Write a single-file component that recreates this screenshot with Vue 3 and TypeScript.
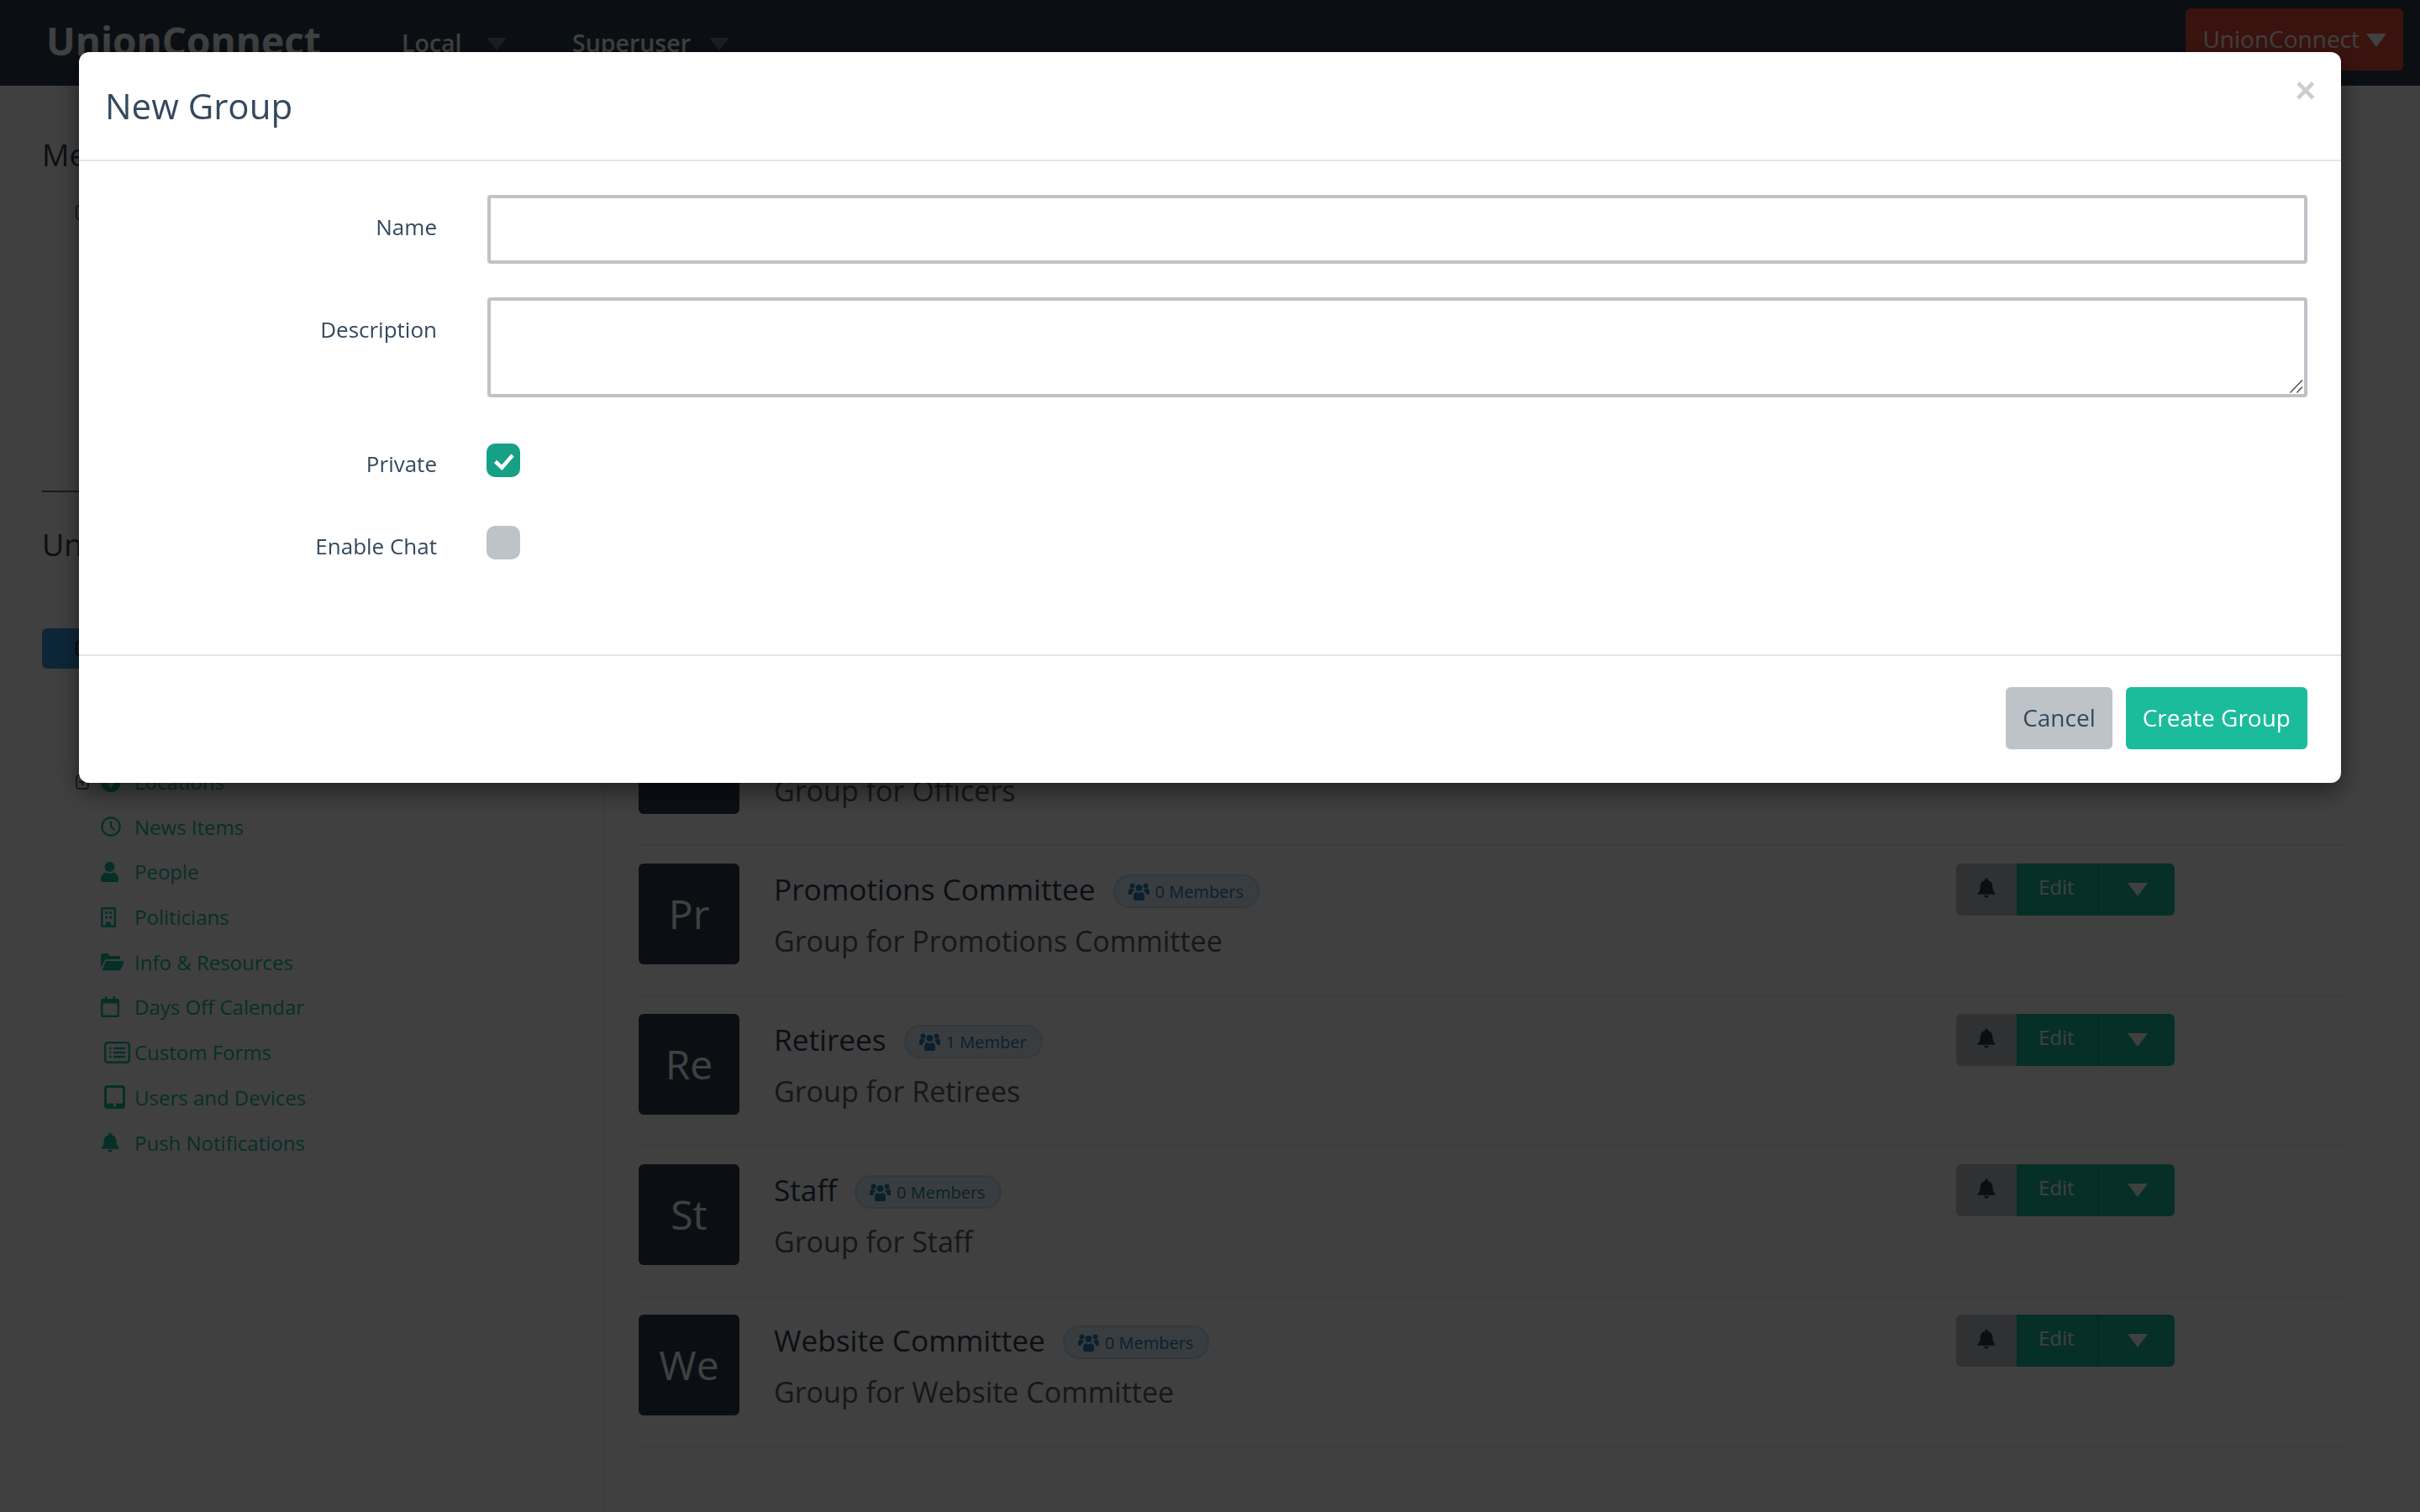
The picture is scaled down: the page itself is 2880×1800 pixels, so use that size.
<script setup lang="ts">
const navLinks = ['Local', 'Superuser']

const sideItems = [
  { label: 'Locations', icon: 'marker', toggle: true },
  { label: 'News Items', icon: 'clock' },
  { label: 'People', icon: 'user' },
  { label: 'Politicians', icon: 'building' },
  { label: 'Info & Resources', icon: 'folder' },
  { label: 'Days Off Calendar', icon: 'calendar' },
  { label: 'Custom Forms', icon: 'list' },
  { label: 'Users and Devices', icon: 'tablet' },
  { label: 'Push Notifications', icon: 'bell' },
]

const groups = [
  { name: 'Officers', members: 0 },
  { name: 'Promotions Committee', members: 0 },
  { name: 'Retirees', members: 1 },
  { name: 'Staff', members: 0 },
  { name: 'Website Committee', members: 0 },
]

function memberLabel(n: number) {
  return n === 1 ? '1 Member' : `${n} Members`
}
</script>

<template>
  <div class="page">
    <header class="nav">
      <span class="logo">UnionConnect</span>
      <div v-for="link in navLinks" :key="link" class="nav-link">
        {{ link }}
        <span class="nav-caret" />
      </div>
      <button class="account">UnionConnect <span class="account-caret" /></button>
    </header>

    <div class="content">
      <aside class="side">
        <h2 class="side-title">Menu</h2>
        <div class="side-item">
          <span class="toggle">
            <svg viewBox="0 0 16 18"><rect x="1" y="1" width="14" height="16" rx="3" /><path d="M8 5v8M4 9h8" /></svg>
          </span>
        </div>
        <hr class="side-rule" />
        <h2 class="side-title">UnionConnect</h2>
        <button class="side-btn">
          <svg viewBox="0 0 16 18"><rect x="1" y="1" width="14" height="16" rx="3" /></svg>
        </button>
        <nav class="side-nav">
          <a v-for="item in sideItems" :key="item.label" class="side-item">
            <span class="toggle">
              <svg v-if="item.toggle" viewBox="0 0 16 18"><rect x="1" y="1" width="14" height="16" rx="3" /><path d="M8 5v8M4 9h8" /></svg>
            </span>
            <span class="ico-slot">
              <svg v-if="item.icon === 'marker'" class="fill" width="24" height="24" viewBox="0 0 24 24"><path fill-rule="evenodd" d="M12 0a12 12 0 1 1 0 24a12 12 0 0 1 0-24zM12 5a5 5 0 0 0-5 5c0 3.500 5 9 5 9s5-5.500 5-9a5 5 0 0 0-5-5z" /></svg>
              <svg v-else-if="item.icon === 'clock'" class="line" width="24" height="24" viewBox="0 0 24 24"><circle cx="12" cy="12" r="10.700" stroke-width="2.200" /><path d="M12 5.500V12l4.500 4" stroke-width="2.200" /></svg>
              <svg v-else-if="item.icon === 'user'" class="fill" width="21" height="24" viewBox="0 0 21 24"><circle cx="10.500" cy="6" r="6" /><path d="M0 21c0-5 3-8 6-8.500 1.300.8 2.800 1.300 4.500 1.300s3.200-.5 4.500-1.300c3 .5 6 3.500 6 8.500v1a2 2 0 0 1-2 2H2a2 2 0 0 1-2-2z" /></svg>
              <svg v-else-if="item.icon === 'building'" class="fill" width="18" height="24" viewBox="0 0 18 24"><path fill-rule="evenodd" d="M2 0h14a2 2 0 0 1 2 2v20a2 2 0 0 1-2 2H2a2 2 0 0 1-2-2V2a2 2 0 0 1 2-2zm.500 2.500v19h3.500v-4h6v4h3.500v-19zM5 5h3v3H5zm5 0h3v3h-3zm-5 5.500h3v3H5zm5 0h3v3h-3z" /></svg>
              <svg v-else-if="item.icon === 'folder'" class="fill" width="28" height="22" viewBox="0 0 28 22"><path d="M0 3a2 2 0 0 1 2-2h6l3 3h10a2 2 0 0 1 2 2v2H7a3 3 0 0 0-2.800 2L0 19z" /><path d="M6 10h20a1.500 1.500 0 0 1 1.400 2l-3.600 8a2 2 0 0 1-1.800 1.200H1.500z" /></svg>
              <svg v-else-if="item.icon === 'calendar'" class="fill" width="22" height="25" viewBox="0 0 22 25"><path fill-rule="evenodd" d="M5 0h2.500v3h7V0H17v3h3a2 2 0 0 1 2 2v18a2 2 0 0 1-2 2H2a2 2 0 0 1-2-2V5a2 2 0 0 1 2-2h3zM2.500 8.500v14h17v-14z" /></svg>
              <svg v-else-if="item.icon === 'list'" class="list-ico line" width="31" height="26" viewBox="0 0 31 26"><rect x="1.200" y="1.200" width="28.600" height="23.600" rx="3" stroke-width="2.400" /><path d="M6 8h2.500M11 8h14M6 13h2.500M11 13h14M6 18h2.500M11 18h14" stroke-width="2.600" /></svg>
              <svg v-else-if="item.icon === 'tablet'" class="list-ico line" width="25" height="28" viewBox="0 0 25 28"><rect x="1.500" y="1.500" width="22" height="25" rx="2.500" stroke-width="3" /><path d="M3 23.500h8M14 23.500h8" stroke-width="4" /></svg>
              <svg v-else-if="item.icon === 'bell'" class="fill" width="22" height="25" viewBox="0 0 24 26"><path d="M12 0a2 2 0 0 1 2 2v.6A8 8 0 0 1 20 10c0 6 2 8 3.500 9.500V21H.5v-1.500C2 18 4 16 4 10a8 8 0 0 1 6-7.400V2a2 2 0 0 1 2-2zM9 22h6a3 3 0 0 1-6 0z" /></svg>
            </span>
            <span class="side-label">{{ item.label }}</span>
          </a>
        </nav>
      </aside>

      <main class="main">
        <div v-for="g in groups" :key="g.name" class="group">
          <div class="avatar">{{ g.name.slice(0, 2) }}</div>
          <div class="info">
            <div class="title-line">
              <span class="group-name">{{ g.name }}</span>
              <span class="badge">
                <svg width="25" height="22" viewBox="0 0 25 22"><circle cx="12.500" cy="7" r="4" /><circle cx="4.500" cy="4.500" r="3" /><circle cx="20.500" cy="4.500" r="3" /><path d="M6 20v-3.500C6 13.500 8 12 9.500 12c1 .6 2 1 3 1s2-.4 3-1c1.500 0 3.500 1.500 3.500 4.500V20a2 2 0 0 1-2 2H8a2 2 0 0 1-2-2z" /><path d="M0 14v-3c0-2 1.500-3.500 2.500-3.500.6.500 1.300.7 2 .7s1 0 1.600-.2c0 1 .3 1.800.9 2.500C5 11.500 4 13 4 15H1a1 1 0 0 1-1-1zM25 14v-3c0-2-1.500-3.500-2.500-3.500-.6.500-1.300.7-2 .7s-1 0-1.600-.2c0 1-.3 1.800-.9 2.500 2 1 3 2.500 3 4.500h3a1 1 0 0 0 1-1z" /></svg>
                {{ memberLabel(g.members) }}
              </span>
            </div>
            <p class="group-desc">Group for {{ g.name }}</p>
          </div>
          <div class="actions">
            <span class="bell-btn">
              <svg width="22" height="25" viewBox="0 0 24 26"><path d="M12 0a2 2 0 0 1 2 2v.6A8 8 0 0 1 20 10c0 6 2 8 3.500 9.500V21H.5v-1.500C2 18 4 16 4 10a8 8 0 0 1 6-7.400V2a2 2 0 0 1 2-2zM9 22h6a3 3 0 0 1-6 0z" /></svg>
            </span>
            <span class="edit-btn">Edit</span>
            <span class="more-btn"><span class="more-caret" /></span>
          </div>
        </div>
      </main>
    </div>

    <div class="overlay">
      <section class="modal">
        <header class="modal-head">
          <h3 class="modal-title">New Group</h3>
          <span class="close">×</span>
        </header>

        <form class="modal-body">
          <div class="field">
            <label class="field-label">Name</label>
            <input class="input" type="text" />
          </div>
          <div class="field">
            <label class="field-label">Description</label>
            <div class="area-wrap">
              <textarea class="input area"></textarea>
              <svg class="grip" width="18" height="18" viewBox="0 0 18 18"><path d="M1.500 16.500L16 1.500M9.500 16.500L16 9.500" /></svg>
            </div>
          </div>
          <div class="field check-private">
            <label class="field-label check-label">Private</label>
            <span class="check on">
              <svg width="40" height="40" viewBox="0 0 40 40"><path d="M10.500 21.500l7.800 7.200L31 14" /></svg>
            </span>
          </div>
          <div class="field check-chat">
            <label class="field-label check-label">Enable Chat</label>
            <span class="check" />
          </div>
        </form>

        <footer class="modal-foot">
          <button class="btn cancel">Cancel</button>
          <button class="btn create">Create Group</button>
        </footer>
      </section>
    </div>
  </div>
</template>

<style scoped>
.page {
  min-height: 1800px;
  font-family: "Open Sans", "Noto Sans", sans-serif;
  color: #34495e;
  background: #fff;
}

.nav {
  display: flex;
  align-items: flex-start;
  height: 102px;
  padding-left: 55px;
  box-sizing: border-box;
  background: #2c3e50;
  color: #fff;
}
.logo {
  width: 423px;
  margin-top: 18px;
  font-size: 46px;
  line-height: 60px;
  font-weight: 700;
  white-space: nowrap;
}
.nav-link {
  display: flex;
  align-items: center;
  margin-top: 31px;
  font-size: 28.500px;
  line-height: 40px;
  font-weight: 600;
}
.nav-link:nth-of-type(1) {
  width: 203px;
}
.nav-caret {
  width: 0;
  height: 0;
  margin: 2px 0 0 29px;
  border-left: 12px solid transparent;
  border-right: 12px solid transparent;
  border-top: 15px solid rgba(255, 255, 255, 0.3);
}
.nav-link:nth-of-type(2) .nav-caret {
  margin-left: 22px;
}
.account {
  display: flex;
  align-items: center;
  gap: 8px;
  height: 74px;
  margin: 10px 20px 0 auto;
  padding: 0 20px 3px;
  border: none;
  border-radius: 6px;
  background: #e74c3c;
  color: #fff;
  font: 28px "Open Sans", sans-serif;
}
.account-caret {
  width: 0;
  height: 0;
  margin-top: 4px;
  border-left: 12px solid transparent;
  border-right: 12px solid transparent;
  border-top: 16px solid #fff;
}

.content {
  display: flex;
  align-items: stretch;
  min-height: 1698px;
}

.side {
  width: 719px;
  flex: none;
  padding: 58px 0 0 50px;
  box-sizing: border-box;
  border-right: 2px solid #f0f0f0;
}
.side-title {
  margin: 0;
  font-size: 36px;
  line-height: 50px;
  font-weight: 400;
  color: #2c3e50;
}
.side-rule {
  width: 640px;
  margin: 304px 0 38px;
  border: none;
  border-top: 2px solid #666;
}
.side-btn {
  display: block;
  width: 240px;
  height: 48px;
  margin: 74px 0 108px;
  padding: 0 0 0 40px;
  border: none;
  border-radius: 6px;
  background: #3498db;
}
.side-btn svg {
  display: block;
  width: 16px;
  height: 18px;
  fill: none;
  stroke: #2a2a2a;
  stroke-width: 2;
}
.side-item {
  display: flex;
  align-items: center;
  height: 53.700px;
  margin: 16px 0 0 40px;
  color: #1abc9c;
  font-size: 24px;
}
.side-nav .side-item {
  margin-top: 0;
}
.toggle {
  display: block;
  width: 30px;
  flex: none;
}
.toggle svg {
  display: block;
  width: 16px;
  height: 18px;
  fill: none;
  stroke: #6d6d6d;
  stroke-width: 2;
}
.ico-slot {
  display: flex;
  width: 40px;
  flex: none;
  align-items: center;
}
.ico-slot .fill {
  fill: currentColor;
}
.ico-slot .line {
  fill: none;
  stroke: currentColor;
}
.list-ico {
  margin-left: 4px;
}
.side-label {
  white-space: nowrap;
}

.main {
  flex: 1;
  padding: 726px 90px 0 41px;
}
.group {
  display: flex;
  height: 179px;
  padding-top: 21px;
  box-sizing: border-box;
  border-bottom: 2px solid #eee;
}
.avatar {
  width: 120px;
  height: 120px;
  margin-right: 41px;
  border-radius: 6px;
  background: #2c3e50;
  color: #fff;
  font-size: 48px;
  line-height: 120px;
  text-align: center;
}
.info {
  flex: 1;
  padding-top: 5px;
}
.title-line {
  display: flex;
  align-items: flex-start;
  gap: 21px;
}
.group-name {
  font-size: 35.200px;
  line-height: 50px;
  color: #2c3e50;
}
.badge {
  display: flex;
  align-items: center;
  gap: 7px;
  height: 40px;
  margin-top: 8px;
  padding: 0 17px 0 16px;
  box-sizing: border-box;
  border: 2px solid rgba(52, 152, 219, 0.2);
  border-radius: 20px;
  background: rgba(52, 152, 219, 0.12);
  color: #2980b9;
  font-size: 20px;
  white-space: nowrap;
}
.badge svg {
  fill: currentColor;
}
.group-desc {
  margin: 15px 0 0;
  font-size: 34px;
  line-height: 44px;
  color: #5e5e5e;
}
.actions {
  display: flex;
  height: 62px;
  margin-right: 202px;
  font-size: 24px;
  color: #fff;
}
.bell-btn {
  display: flex;
  width: 72px;
  align-items: center;
  justify-content: center;
  padding-bottom: 4px;
  box-sizing: border-box;
  border-radius: 6px 0 0 6px;
  background: #bdc3c7;
}
.bell-btn svg {
  fill: #2c3e50;
}
.edit-btn {
  width: 96px;
  padding: 10px 0 0 26px;
  box-sizing: border-box;
  background: #1abc9c;
  line-height: 36px;
}
.more-btn {
  display: flex;
  width: 92px;
  align-items: center;
  justify-content: center;
  padding-left: 2px;
  box-sizing: border-box;
  border-left: 2px solid #16a98c;
  border-radius: 0 6px 6px 0;
  background: #1abc9c;
}
.more-caret {
  width: 0;
  height: 0;
  border-left: 12px solid transparent;
  border-right: 12px solid transparent;
  border-top: 16px solid #fff;
}

.overlay {
  position: fixed;
  inset: 0;
  padding: 62px 94px 0 94px;
  background: rgba(0, 0, 0, 0.75);
}
.modal {
  border-radius: 12px;
  background: #fff;
  box-shadow: 0 10px 30px rgba(0, 0, 0, 0.5);
}
.modal-head {
  position: relative;
  display: flex;
  align-items: center;
  height: 128px;
  padding-left: 31px;
  border-bottom: 2px solid #e5e5e5;
}
.modal-title {
  margin: 0;
  font-size: 42px;
  line-height: 60px;
  font-weight: 400;
  color: #34495e;
}
.close {
  position: absolute;
  top: 22px;
  right: 30px;
  font-family: "Liberation Sans", sans-serif;
  font-size: 42px;
  line-height: 48px;
  font-weight: 700;
  color: rgba(0, 0, 0, 0.2);
}
.modal-body {
  padding: 40px 40px 110px 0;
}
.field {
  display: flex;
  align-items: flex-start;
}
.field + .field {
  margin-top: 40px;
}
.field.check-private {
  margin-top: 55px;
}
.field.check-chat {
  margin-top: 55px;
}
.field-label {
  width: 426px;
  height: 57px;
  flex: none;
  margin-right: 60px;
  padding-top: 20px;
  box-sizing: border-box;
  font-size: 26px;
  line-height: 36px;
  text-align: right;
  color: #34495e;
}
.field-label.check-label {
  height: 43px;
  padding-top: 6px;
}
.input {
  flex: 1;
  display: block;
  height: 82px;
  padding: 0 20px;
  box-sizing: border-box;
  border: 4px solid #bdc3c7;
  border-radius: 4px;
  outline: none;
  background: #fff;
  font: 26px "Open Sans", sans-serif;
  color: #34495e;
}
.area-wrap {
  position: relative;
  flex: 1;
  height: 119px;
}
.area {
  width: 100%;
  height: 119px;
  padding: 16px 20px;
  resize: none;
}
.grip {
  position: absolute;
  right: 4px;
  bottom: 4px;
  fill: none;
  stroke: #555;
  stroke-width: 1.600;
  pointer-events: none;
}
.check {
  display: block;
  width: 40px;
  height: 40px;
  margin-left: -1px;
  border-radius: 10px;
  background: #bdc3c7;
}
.check.on {
  background: #16a085;
}
.check svg {
  display: block;
  fill: none;
  stroke: #fff;
  stroke-width: 4.500;
}
.modal-foot {
  display: flex;
  justify-content: flex-end;
  gap: 16px;
  padding: 37px 40px 40px 0;
  border-top: 2px solid #e5e5e5;
}
.btn {
  height: 74px;
  padding: 0 20px 3px;
  border: none;
  border-radius: 6px;
  font: 28px "Open Sans", sans-serif;
}
.cancel {
  background: #bdc3c7;
  color: #34495e;
}
.create {
  background: #1abc9c;
  color: #fff;
}
</style>

<style>
html,
body {
  margin: 0;
  background: #fff;
}
</style>
